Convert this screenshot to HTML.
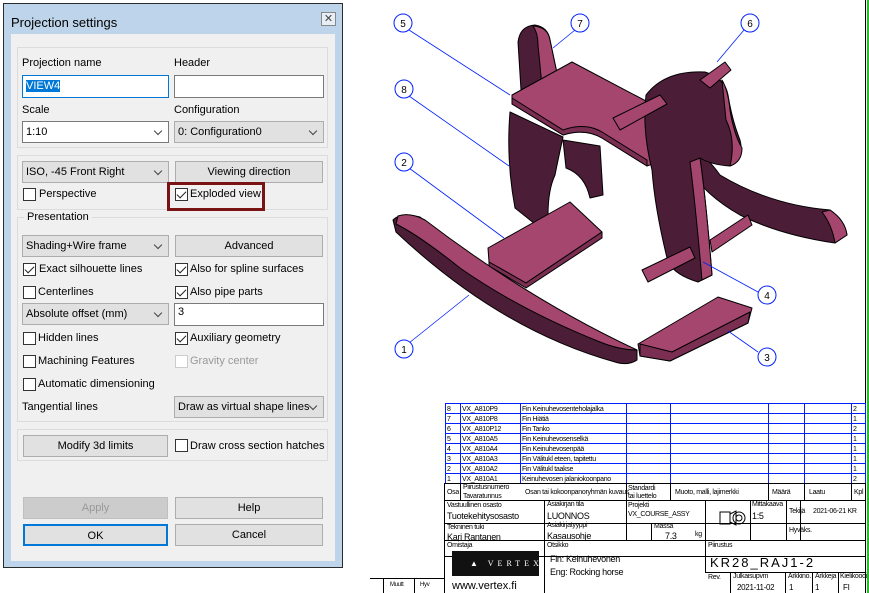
<!DOCTYPE html>
<html><head><meta charset="utf-8">
<style>
*{box-sizing:border-box;margin:0;padding:0}
body{width:869px;height:593px;background:#fff;position:relative;overflow:hidden;font-family:"Liberation Sans",sans-serif;font-size:11px;color:#000}
.a{position:absolute}
.win{left:3px;top:3px;width:340px;height:565px;border:1px solid #2b2b2b;background:#bed4ea}
.client{left:11px;top:34px;width:324px;height:527px;background:#f0f0f0}
.grp{position:absolute;border:1px solid #dcdcdc}
.lbl{position:absolute;white-space:nowrap}
.inp{position:absolute;background:#fff;border:1px solid #7a7a7a;height:23px;padding:4px 3px}
.sel{position:absolute;border:1px solid #adadad;background:#e1e1e1;height:22px;padding:4px 3px;white-space:nowrap}
.sel.w{background:#fff;border-color:#7a7a7a}
.sel:after{content:"";position:absolute;right:7px;top:6px;width:5px;height:5px;border-right:1px solid #444;border-bottom:1px solid #444;transform:rotate(45deg)}
.btn{position:absolute;border:1px solid #adadad;background:#e1e1e1;height:22px;text-align:center;line-height:20px}
.cb{position:absolute;width:13px;height:13px;border:1px solid #333;background:#fff}
.cb.c:after{content:"";position:absolute;left:3px;top:0px;width:4px;height:8px;border-right:1.2px solid #222;border-bottom:1.2px solid #222;transform:rotate(45deg)}
.t{position:absolute;font-size:7px;white-space:nowrap;letter-spacing:-0.3px}
</style></head><body>
<div class="a win"></div>
<div class="lbl" style="left:11px;top:15px;font-size:13px">Projection settings</div>
<div class="a" style="left:321px;top:12px;width:15px;height:14px;border:1px solid #888;background:#e8eef5;font-size:11px;line-height:12px;text-align:center;color:#444">✕</div>
<div class="a client"></div>

<div class="grp" style="left:17px;top:47px;width:311px;height:101px"></div>
<div class="lbl" style="left:22px;top:57px">Projection name</div>
<div class="lbl" style="left:174px;top:57px">Header</div>
<div class="inp" style="left:22px;top:75px;width:147px;border-color:#0078d7"><span style="background:#0078d7;color:#fff">VIEW4</span></div>
<div class="inp" style="left:174px;top:75px;width:150px"></div>
<div class="lbl" style="left:22px;top:104px">Scale</div>
<div class="lbl" style="left:174px;top:104px">Configuration</div>
<div class="sel w" style="left:22px;top:121px;width:147px">1:10</div>
<div class="sel" style="left:174px;top:121px;width:150px">0: Configuration0</div>

<div class="grp" style="left:17px;top:155px;width:311px;height:55px"></div>
<div class="sel" style="left:22px;top:161px;width:147px">ISO, -45 Front Right</div>
<div class="btn" style="left:175px;top:161px;width:148px">Viewing direction</div>
<div class="cb" style="left:23px;top:188px"></div><div class="lbl" style="left:39px;top:188px">Perspective</div>
<div class="a" style="left:167px;top:182px;width:98px;height:29px;border:3px solid #7a1414"></div>
<div class="cb c" style="left:175px;top:188px"></div><div class="lbl" style="left:190px;top:188px">Exploded view</div>

<div class="grp" style="left:17px;top:217px;width:311px;height:205px"></div>
<div class="lbl" style="left:24px;top:211px;background:#f0f0f0;padding:0 3px">Presentation</div>
<div class="sel" style="left:22px;top:235px;width:147px">Shading+Wire frame</div>
<div class="btn" style="left:175px;top:235px;width:148px">Advanced</div>
<div class="cb c" style="left:23px;top:263px"></div><div class="lbl" style="left:39px;top:263px">Exact silhouette lines</div>
<div class="cb c" style="left:175px;top:263px"></div><div class="lbl" style="left:190px;top:263px">Also for spline surfaces</div>
<div class="cb" style="left:23px;top:286px"></div><div class="lbl" style="left:38px;top:286px">Centerlines</div>
<div class="cb c" style="left:175px;top:286px"></div><div class="lbl" style="left:190px;top:286px">Also pipe parts</div>
<div class="sel" style="left:22px;top:303px;width:147px">Absolute offset (mm)</div>
<div class="inp" style="left:174px;top:303px;width:150px;height:23px;padding:2px 3px">3</div>
<div class="cb" style="left:23px;top:332px"></div><div class="lbl" style="left:38px;top:332px">Hidden lines</div>
<div class="cb c" style="left:175px;top:332px"></div><div class="lbl" style="left:190px;top:332px">Auxiliary geometry</div>
<div class="cb" style="left:23px;top:355px"></div><div class="lbl" style="left:38px;top:355px">Machining Features</div>
<div class="cb" style="left:175px;top:355px;border-color:#ccc"></div><div class="lbl" style="left:190px;top:355px;color:#999">Gravity center</div>
<div class="cb" style="left:23px;top:378px"></div><div class="lbl" style="left:38px;top:378px">Automatic dimensioning</div>
<div class="lbl" style="left:22px;top:401px">Tangential lines</div>
<div class="sel" style="left:174px;top:396px;width:150px">Draw as virtual shape lines</div>

<div class="grp" style="left:17px;top:429px;width:311px;height:32px"></div>
<div class="btn" style="left:23px;top:435px;width:145px">Modify 3d limits</div>
<div class="cb" style="left:175px;top:439px"></div><div class="lbl" style="left:190px;top:440px">Draw cross section hatches</div>

<div class="btn" style="left:23px;top:497px;width:145px;background:#ccc;border-color:#bfbfbf;color:#999">Apply</div>
<div class="btn" style="left:175px;top:497px;width:148px">Help</div>
<div class="btn" style="left:23px;top:524px;width:145px;border:2px solid #0078d7">OK</div>
<div class="btn" style="left:175px;top:524px;width:148px">Cancel</div>

<!-- drawing -->
<div class="a" style="left:865px;top:0;width:1px;height:593px;background:#000"></div>
<div class="a" style="left:867px;top:0;width:2px;height:593px;background:#22c322"></div>

<svg class="a" style="left:0;top:0" width="869" height="593" viewBox="0 0 869 593">
<g stroke="#000" stroke-width="1" stroke-linejoin="round">
<!-- right rocker -->
<path d="M690,150 Q702,150 720,175 Q770,205 830,210 Q845,220 847,235 L835,243 Q780,235 740,215 Q705,195 690,170Z" fill="#4c1d37"/>
<path d="M830,210 Q845,220 847,235 L835,243 Q832,225 822,212Z" fill="#a4466e"/>
<!-- back leg -->
<path d="M563,140 L600,146 L603,195 L590,198 Q585,175 566,168 Z" fill="#4c1d37"/>
<!-- backrest -->
<path d="M521,90 L518,42 Q520,26 535,25 Q548,27 550,40 L558,78 Z" fill="#4c1d37"/>
<path d="M533,26 Q548,27 550,40 L558,78 L542,86 L538,45 Q538,33 533,26Z" fill="#a4466e"/>
<!-- seat -->
<path d="M512,95 L572,62 L663,110 L663,160 L647,166 L602,138 Q585,128 563,135 L512,104 Z" fill="#a4466e"/>
<path d="M512,104 L563,135 Q585,128 602,138 L647,166 L647,160 L602,132 Q585,122 563,130 L512,98 Z" fill="#7a2f52"/>
<!-- left leg -->
<path d="M510,112 L563,137 Q558,160 555,175 Q548,190 548,215 Q545,227 535,224 L515,208 Q506,160 510,112Z" fill="#4c1d37"/>
<!-- head -->
<path d="M646,95 Q665,70 705,72 Q725,78 728,95 Q732,120 740,140 Q745,160 730,166 Q712,165 700,158 Q706,200 712,275 L698,282 Q675,275 668,262 Q655,210 652,170 Q642,130 646,95Z" fill="#4c1d37"/>
<path d="M700,158 Q706,200 712,275 L702,280 Q696,210 690,162 Z" fill="#a4466e"/>
<path d="M722,80 Q728,90 730,110 Q734,135 742,148 Q742,162 730,166 Q736,140 726,120 Z" fill="#a4466e"/>
<!-- pegs -->
<path d="M613,118 L660,95 L667,104 L620,130 Z" fill="#a4466e"/>
<path d="M700,80 L725,62 L731,70 L710,88 Z" fill="#a4466e"/>
<path d="M642,270 L690,247 L695,258 L648,282 Z" fill="#a4466e"/>
<path d="M710,240 L748,215 L752,225 L712,252 Z" fill="#a4466e"/>
<!-- board 2 -->
<path d="M488,248 L570,202 L602,232 L526,283 L489,262 Z" fill="#a4466e"/>
<path d="M489,262 L526,283 L602,232 L602,238 L526,288 L489,266 Z" fill="#7a2f52"/>
<!-- left rocker -->
<path d="M393,220 Q400,212 420,217 Q520,300 637,350 L637,360 Q628,366 615,362 Q500,330 396,232 Z" fill="#4c1d37"/>
<path d="M398,216 Q410,212 425,220 Q530,300 637,350 Q620,350 600,342 Q520,310 460,268 Q420,236 396,224 Z" fill="#a4466e"/>
<!-- board 3 -->
<path d="M638,344 L718,297 L752,308 L748,323 L670,361 L640,356 Z" fill="#a4466e"/>
<path d="M640,344 L672,352 L750,312 L748,323 L670,361 L640,356 Z" fill="#7a2f52"/>
</g>
<g stroke="#0020ff" stroke-width="0.8" fill="none">
<line x1="409" y1="30" x2="510" y2="95"/>
<line x1="575" y1="30" x2="553" y2="48"/>
<line x1="744" y1="30" x2="717" y2="62"/>
<line x1="409" y1="96" x2="509" y2="166"/>
<line x1="409" y1="168" x2="504" y2="238"/>
<line x1="758" y1="292" x2="703" y2="262"/>
<line x1="758" y1="352" x2="728" y2="331"/>
<line x1="409" y1="343" x2="469" y2="295"/>
</g>
<g stroke="#0020ff" stroke-width="1" fill="#fff">
<circle cx="403" cy="23" r="9"/><circle cx="580" cy="23" r="9"/><circle cx="750" cy="23" r="9"/>
<circle cx="404" cy="89" r="9"/><circle cx="404" cy="162" r="9"/><circle cx="767" cy="295" r="9"/>
<circle cx="767" cy="357" r="9"/><circle cx="404" cy="349" r="9"/>
</g>
<g font-family="Liberation Sans" font-size="10" text-anchor="middle" fill="#000">
<text x="403" y="27">5</text><text x="580" y="27">7</text><text x="750" y="27">6</text>
<text x="404" y="93">8</text><text x="404" y="166">2</text><text x="767" y="299">4</text>
<text x="767" y="361">3</text><text x="404" y="353">1</text>
</g>
<!-- parts table -->
<g stroke="#0020ff" stroke-width="1" fill="none">
<rect x="445.5" y="403.5" width="420" height="80"/>
<path d="M445,413.5H866M445,423.5H866M445,433.5H866M445,443.5H866M445,453.5H866M445,463.5H866M445,473.5H866"/>
<path d="M460.5,403V484M520.5,403V484M626.5,403V484M670.5,403V484M768.5,403V484M804.5,403V484M851.5,403V484"/>
</g>
<g stroke="#000" stroke-width="1" fill="none">
<path d="M444.5,483V593M444,483.5H866M444,500.5H866M444,523.5H866M444,540.5H866M444,556.5H866"/>
<path d="M460.5,484V500M544.5,500V593M626.5,484V540M670.5,484V500M768.5,484V500M804.5,484V500M851.5,484V500"/>
<path d="M705.5,500V572M750.5,500V540M786.5,500V540M800.5,500V540M651.5,523V540"/>
<path d="M705,572.5H866M730.5,572V593M785.5,572V593M812.5,572V593M838.5,572V593"/>
<path d="M370,578.5H444M383.5,578V593M414.5,578V593"/>
</g>
<path d="M720,512h10v12h-10zM730,514l6,-3v14l-6,-3" fill="none" stroke="#000"/>
<circle cx="739" cy="518" r="6" fill="none" stroke="#000"/><circle cx="739" cy="518" r="3" fill="none" stroke="#000"/>
<rect x="452" y="551" width="87" height="25" fill="#111"/>
<text x="470" y="566" font-size="8" fill="#fff" font-family="Liberation Serif" letter-spacing="4">▲ VERTEX</text>
</svg>
<div class="t" style="left:447px;top:405px;line-height:10px">8<br>7<br>6<br>5<br>4<br>3<br>2<br>1</div>
<div class="t" style="left:462px;top:405px;line-height:10px">VX_A810P9<br>VX_A810P8<br>VX_A810P12<br>VX_A810A5<br>VX_A810A4<br>VX_A810A3<br>VX_A810A2<br>VX_A810A1</div>
<div class="t" style="left:522px;top:405px;line-height:10px">Fin Keinuhevosenteholajalka<br>Fin Hiätiä<br>Fin Tanko<br>Fin Keinuhevosenselkä<br>Fin Keinuhevosenpää<br>Fin Välitukl eteen, tapitettu<br>Fin Välitukl taakse<br>Keinuhevosen jalaniokoonpano</div>
<div class="t" style="left:853px;top:405px;line-height:10px">2<br>1<br>2<br>1<br>1<br>1<br>1<br>2</div>
<div class="t" style="left:447px;top:489px">Osa</div>
<div class="t" style="left:463px;top:484px">Piirustusnumero</div><div class="t" style="left:463px;top:493px">Tavaratunnus</div>
<div class="t" style="left:525px;top:489px">Osan tai kokoonpanoryhmän kuvaus</div>
<div class="t" style="left:628px;top:485px">Standardi</div><div class="t" style="left:628px;top:493px">tai luettelo</div>
<div class="t" style="left:675px;top:489px">Muoto, malli, lajimerkki</div>
<div class="t" style="left:772px;top:489px">Määrä</div><div class="t" style="left:809px;top:489px">Laatu</div><div class="t" style="left:854px;top:489px">Kpl</div>
<div class="t" style="left:447px;top:502px">Vastuullinen osasto</div><div class="t" style="left:447px;top:511px;font-size:9px">Tuotekehitysosasto</div>
<div class="t" style="left:547px;top:501px">Asiakirjan tila</div><div class="t" style="left:547px;top:511px;font-size:9px">LUONNOS</div>
<div class="t" style="left:628px;top:502px">Projekti</div><div class="t" style="left:628px;top:511px">VX_COURSE_ASSY</div>
<div class="t" style="left:752px;top:501px">Mittakaava</div><div class="t" style="left:752px;top:511px;font-size:9px">1:5</div>
<div class="t" style="left:789px;top:508px">Tekijä</div><div class="t" style="left:813px;top:508px">2021-06-21 KR</div>
<div class="t" style="left:789px;top:527px">Hyväks.</div>
<div class="t" style="left:447px;top:524px">Tekninen tuki</div><div class="t" style="left:447px;top:532px;font-size:9px">Kari Rantanen</div>
<div class="t" style="left:547px;top:522px">Asiakirjatyyppi</div><div class="t" style="left:547px;top:531px;font-size:9px">Kasausohje</div>
<div class="t" style="left:654px;top:523px">Massa</div><div class="t" style="left:665px;top:531px;font-size:9px">7.3</div><div class="t" style="left:695px;top:531px">kg</div>
<div class="t" style="left:447px;top:542px">Omistaja</div>
<div class="t" style="left:547px;top:542px">Otsikko</div>
<div class="t" style="left:550px;top:554px;font-size:9px">Fin: Keinuhevonen</div>
<div class="t" style="left:550px;top:567px;font-size:9px">Eng: Rocking horse</div>
<div class="t" style="left:708px;top:542px">Piirustus</div>
<div class="t" style="left:710px;top:555px;font-size:13px;letter-spacing:2px">KR28_RAJ1-2</div>
<div class="t" style="left:708px;top:574px">Rev.</div>
<div class="t" style="left:733px;top:573px">Julkaisupvm</div><div class="t" style="left:737px;top:583px;font-size:8px">2021-11-02</div>
<div class="t" style="left:788px;top:573px">Arkkino.</div><div class="t" style="left:789px;top:583px;font-size:8px">1</div>
<div class="t" style="left:815px;top:573px">Arkkeja</div><div class="t" style="left:815px;top:583px;font-size:8px">1</div>
<div class="t" style="left:840px;top:573px">Kielikoodi</div><div class="t" style="left:843px;top:583px;font-size:8px">FI</div>
<div class="t" style="left:452px;top:580px;font-size:11px;letter-spacing:0">www.vertex.fi</div>
<div class="t" style="left:390px;top:582px;font-size:6px">Muutt</div><div class="t" style="left:420px;top:582px;font-size:6px">Hyv</div>
</body></html>
